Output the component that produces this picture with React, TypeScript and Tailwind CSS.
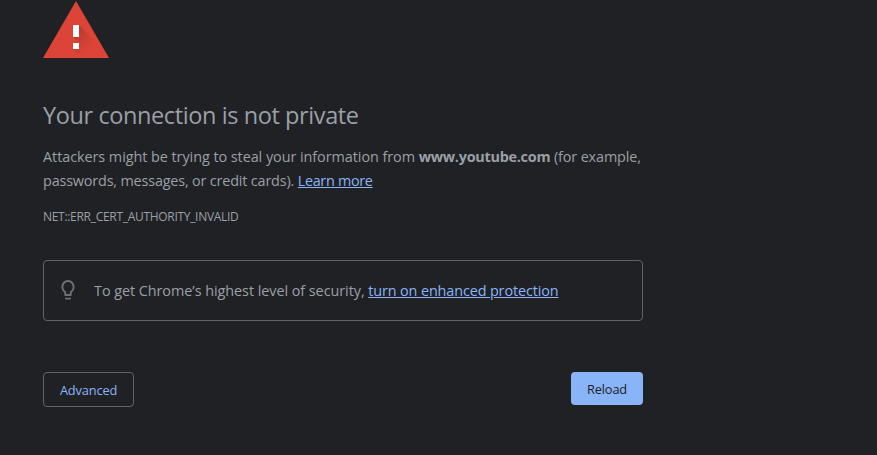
export default function App() {
  return (
    <main className="h-[455px] w-full overflow-hidden border-b border-[#251f25] bg-[#202124] pl-[43px] font-['Open_Sans','Noto_Sans',sans-serif] text-[#9aa0a6]">
      <div className="flex w-[600px] flex-col whitespace-nowrap">
        <svg className="mt-px h-[57px] w-[66px]" viewBox="0 0 66 57" aria-hidden="true">
          <defs>
            <linearGradient id="shade" x1="32" y1="26" x2="54" y2="48" gradientUnits="userSpaceOnUse">
              <stop offset="0" stopColor="#b8382e" />
              <stop offset=".8" stopColor="#db4437" />
            </linearGradient>
          </defs>
          <path d="M33 0 66 57H0Z" fill="#db4437" />
          <path d="M36 24 51.5 40 61.3 57H39L30 48l6-6-6-6Z" fill="url(#shade)" />
          <path d="M30 24h6v12h-6zM30 42h6v6h-6z" fill="#fff" />
        </svg>

        <h1 className="mt-[42px] h-[29px] text-[23.5px] leading-[30px] tracking-[-0.4px]">
          Your connection is not private
        </h1>

        <p className="mt-4 text-[14.4px] leading-6">
          <span className="tracking-[-0.05px]">Attackers might be trying to steal your information from </span>
          <strong className="font-bold tracking-[-0.26px]">www.youtube.com</strong>
          <span className="tracking-[-0.12px]"> (for example,</span>
          <br />
          <span className="tracking-[-0.17px]">passwords, messages, or credit cards). </span>
          <a href="#" className="tracking-[-0.3px] text-[#8ab4f8] underline">Learn more</a>
        </p>

        <p className="mt-[14px] h-5 text-[12px] leading-5 tracking-[-0.3px]">NET::ERR_CERT_AUTHORITY_INVALID</p>

        <section className="mt-[33px] flex h-[61px] items-center rounded-[4px] border border-[#5f6368] pl-3">
          <svg className="mr-[14px] mb-[2px] size-6 shrink-0" viewBox="0 0 24 24" fill="#6f7072" aria-hidden="true">
            <path d="M9 20.500c0 .5.4 1 1 1h4c.6 0 1-.5 1-1V19.800H9zM12 2C8.200 2 5.400 5.100 5.400 8.800c0 2.400 1.200 4.500 2.900 5.700V17c0 .5.4 1 1 1h5.400c.6 0 1-.5 1-1v-2.500c1.700-1.200 2.900-3.300 2.900-5.700C18.600 5.100 15.800 2 12 2zm2.600 11.100l-.8.6V16h-3.600v-2.300l-.8-.6C8 12.200 7.400 10.600 7.400 9c0-2.800 1.900-5 4.600-5s4.600 2.200 4.600 5c0 1.600-.6 3.200-2 4.100z" />
          </svg>
          <p className="text-[14.4px] leading-6">
            <span className="tracking-[-0.05px]">To get Chrome’s highest level of security, </span>
            <a href="#" className="tracking-[-0.12px] text-[#8ab4f8] underline">turn on enhanced protection</a>
          </p>
        </section>

        <div className="mt-[51px] flex items-start justify-between text-[12.8px] tracking-[-0.15px]">
          <button className="h-[35px] w-[91px] rounded-[4px] border border-[#5f6368] pt-[3px] text-[#8ab4f8]">Advanced</button>
          <button className="h-[33px] w-[72px] rounded-[4px] bg-[#8ab4f8] pt-[3px] text-[#202124]">Reload</button>
        </div>
      </div>
    </main>
  );
}
